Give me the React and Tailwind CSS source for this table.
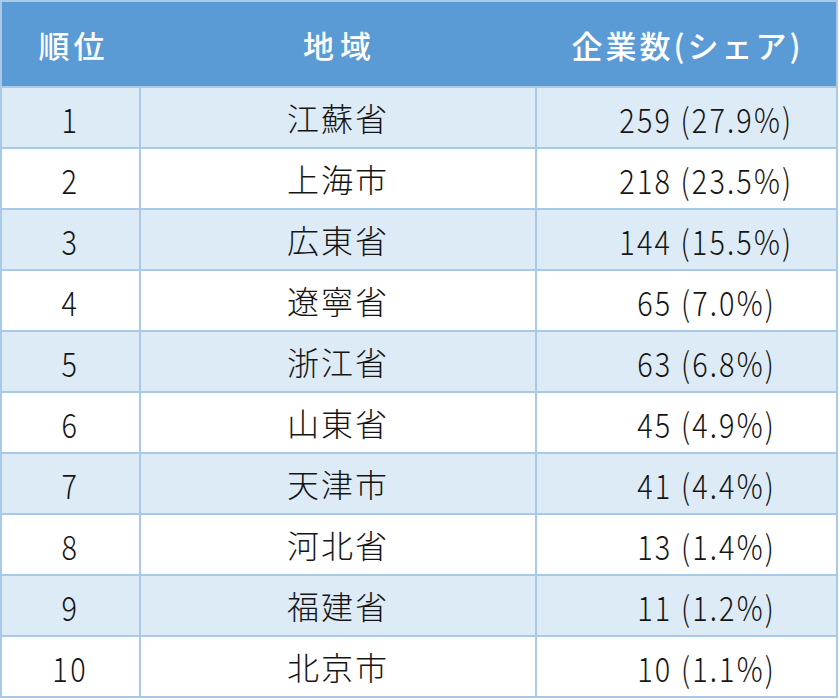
const rows = [
  ["1", "江蘇省", "259 (27.9%)"],
  ["2", "上海市", "218 (23.5%)"],
  ["3", "広東省", "144 (15.5%)"],
  ["4", "遼寧省", "65 (7.0%)"],
  ["5", "浙江省", "63 (6.8%)"],
  ["6", "山東省", "45 (4.9%)"],
  ["7", "天津市", "41 (4.4%)"],
  ["8", "河北省", "13 (1.4%)"],
  ["9", "福建省", "11 (1.2%)"],
  ["10", "北京市", "10 (1.1%)"],
];

export default function App() {
  return (
    <div className="w-[840px] h-[700px] bg-white">
      <div className="w-[838px] h-[698px] border-2 border-[#a9c9e8] flex flex-col">
        <div
          className="h-[84px] bg-[#5b9bd5] grid grid-cols-[137px_394px_1fr] items-center text-white text-[31px] font-medium"
          style={{ fontFamily: '"Noto Sans CJK JP", sans-serif' }}
        >
          <div className="text-center pl-[6px] pt-[2px] tracking-[4px]">順位</div>
          <div className="text-center pl-[8px] pt-[2px] tracking-[6px]">地域</div>
          <div className="text-center pl-[6px] pt-[2px] tracking-[3px]">企業数(シェア)</div>
        </div>
        {rows.map(([rank, region, count], i) => (
          <div
            key={rank}
            className={
              "h-[61px] border-t-2 border-[#a9c9e8] grid grid-cols-[137px_2px_394px_2px_1fr] items-center text-[#151515] " +
              (i % 2 === 0 ? "bg-[#ddebf7]" : "bg-white")
            }
          >
            <div
              className="text-center text-[34px] font-light pt-[2px]"
              style={{ fontFamily: '"Noto Sans CJK JP", sans-serif' }}
            >
              <span className="inline-block scale-x-[0.85] tracking-[3px]">{rank}</span>
            </div>
            <div className="h-full bg-[#a9c9e8]" />
            <div
              className="text-center text-[32px] font-light tracking-[2px] pb-[2px]"
              style={{ fontFamily: '"Noto Sans CJK JP", sans-serif' }}
            >
              {region}
            </div>
            <div className="h-full bg-[#a9c9e8]" />
            <div
              className="text-center text-[34px] font-light pl-[40px] pt-[2px]"
              style={{ fontFamily: '"Noto Sans CJK JP", sans-serif' }}
            >
              <span className="inline-block scale-x-[0.85] tracking-[2.5px] whitespace-nowrap">{count}</span>
            </div>
          </div>
        ))}
      </div>
    </div>
  );
}
